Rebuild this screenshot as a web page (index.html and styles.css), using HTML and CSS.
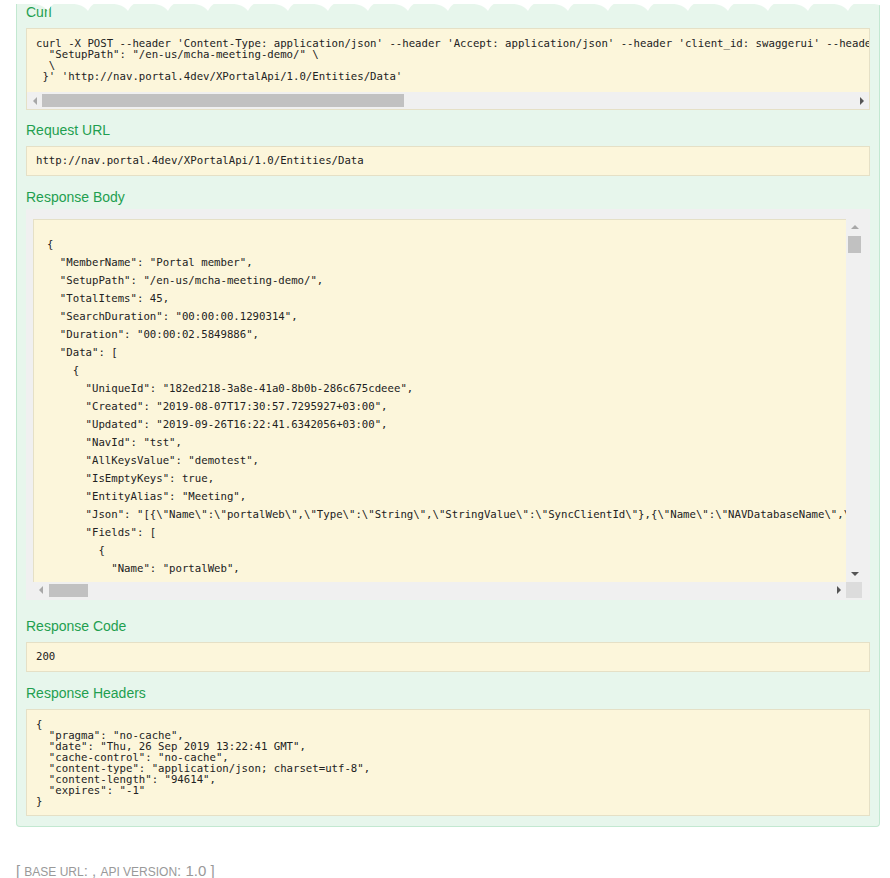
FILE: index.html
```html
<!DOCTYPE html>
<html>
<head>
<meta charset="utf-8">
<link rel="stylesheet" href="styles.css">
</head>
<body>
<div class="page">
  <svg class="tear" width="890" height="20" viewBox="0 0 890 20">
    <defs>
      <pattern id="wave" width="40" height="20" patternUnits="userSpaceOnUse" x="21" y="0">
        <path d="M0 0H40V2C34 2 30 5 27 11C23 5 14 3 0 3Z" fill="#ffffff"/>
      </pattern>
    </defs>
    <rect x="0" y="0" width="890" height="20" fill="url(#wave)"/>
  </svg>

  <div class="panel">
    <h4 class="title first">Curl</h4>
    <div class="box curl">
      <pre class="mono curl-text">curl -X POST --header 'Content-Type: application/json' --header 'Accept: application/json' --header 'client_id: swaggerui' --header 'Authorization: Bearer' -d '{ \
  "SetupPath": "/en-us/mcha-meeting-demo/" \
  \
 }' 'http://nav.portal.4dev/XPortalApi/1.0/Entities/Data'</pre>
      <div class="hbar">
        <div class="btn"><span class="arr-l dim"></span></div>
        <div class="thumb curl-thumb"></div>
        <div class="spacer"></div>
        <div class="btn"><span class="arr-r"></span></div>
      </div>
    </div>

    <h4 class="title">Request URL</h4>
    <pre class="box mono single">http://nav.portal.4dev/XPortalApi/1.0/Entities/Data</pre>

    <h4 class="title body-title">Response Body</h4>
    <div class="body-wrap">
      <div class="scroller">
        <pre class="mono body-text">{
  "MemberName": "Portal member",
  "SetupPath": "/en-us/mcha-meeting-demo/",
  "TotalItems": 45,
  "SearchDuration": "00:00:00.1290314",
  "Duration": "00:00:02.5849886",
  "Data": [
    {
      "UniqueId": "182ed218-3a8e-41a0-8b0b-286c675cdeee",
      "Created": "2019-08-07T17:30:57.7295927+03:00",
      "Updated": "2019-09-26T16:22:41.6342056+03:00",
      "NavId": "tst",
      "AllKeysValue": "demotest",
      "IsEmptyKeys": true,
      "EntityAlias": "Meeting",
      "Json": "[{\"Name\":\"portalWeb\",\"Type\":\"String\",\"StringValue\":\"SyncClientId\"},{\"Name\":\"NAVDatabaseName\",\"Type\":\"String\"}]",
      "Fields": [
        {
          "Name": "portalWeb",</pre>
        <div class="vbar">
          <div class="vbtn"><span class="arr-u dim"></span></div>
          <div class="vthumb"></div>
          <div class="vspace"></div>
          <div class="vbtn"><span class="arr-d"></span></div>
        </div>
        <div class="hbar body-hbar">
          <div class="btn"><span class="arr-l dim"></span></div>
          <div class="thumb body-thumb"></div>
          <div class="spacer"></div>
          <div class="btn"><span class="arr-r"></span></div>
        </div>
        <div class="corner"></div>
      </div>
    </div>

    <h4 class="title code-title">Response Code</h4>
    <pre class="box mono single">200</pre>

    <h4 class="title headers-title">Response Headers</h4>
    <pre class="box mono headers">{
  "pragma": "no-cache",
  "date": "Thu, 26 Sep 2019 13:22:41 GMT",
  "cache-control": "no-cache",
  "content-type": "application/json; charset=utf-8",
  "content-length": "94614",
  "expires": "-1"
}</pre>
  </div>

  <div class="footer">[ <span class="sc">BASE URL</span>: , <span class="sc">API VERSION</span>: 1.0 ]</div>
</div>
</body>
</html>
```

FILE: styles.css
```css
* { box-sizing: border-box; }

html, body {
  margin: 0;
  padding: 0;
  background: #ffffff;
}

body {
  font-family: "Liberation Sans", Arial, sans-serif;
}

.page {
  position: relative;
  width: 890px;
  height: 878px;
  overflow: hidden;
  padding: 0 10px 0 16px;
}

.tear {
  position: absolute;
  top: 0;
  left: 0;
  width: 890px;
  height: 20px;
  z-index: 2;
}

.panel {
  background: #e7f6ec;
  border: 1px solid #c3e8d1;
  border-top: 0;
  border-radius: 0 0 4px 4px;
  padding: 0 9px 10px 9px;
}

.title {
  margin: 12px 0 8px;
  font-size: 14px;
  line-height: 16px;
  font-weight: normal;
  color: #1f9f50;
}

.title.first { margin-top: 4px; }
.title.body-title { margin-top: 13px; margin-bottom: 4px; }
.title.code-title { margin-top: 18px; }
.title.headers-title { margin-top: 13px; }

.box {
  background: #fcf6db;
  border: 1px solid #e5e0c6;
}

.mono {
  font-family: "DejaVu Sans Mono", "Liberation Mono", monospace;
  font-size: 10.68px;
  color: #222222;
  margin: 0;
  white-space: pre;
}

.curl {
  overflow: hidden;
}

.curl-text {
  height: 63px;
  padding: 9px 9px 0 9px;
  line-height: 11px;
  overflow: hidden;
}

.hbar {
  display: flex;
  align-items: center;
  height: 17px;
  background: #f0f0f0;
}

.btn {
  width: 15px;
  height: 100%;
  display: flex;
  align-items: center;
  justify-content: center;
  flex: none;
}

.spacer { flex: 1; }

.thumb {
  height: 13px;
  background: #c1c1c1;
  flex: none;
}

.curl-thumb { width: 362px; }

.arr-l, .arr-r, .arr-u, .arr-d {
  display: block;
  width: 0;
  height: 0;
}

.arr-l {
  border-top: 4px solid transparent;
  border-bottom: 4px solid transparent;
  border-right: 4px solid #555555;
}

.arr-r {
  border-top: 4px solid transparent;
  border-bottom: 4px solid transparent;
  border-left: 4px solid #555555;
}

.arr-u {
  border-left: 4px solid transparent;
  border-right: 4px solid transparent;
  border-bottom: 4px solid #555555;
}

.arr-d {
  border-left: 4px solid transparent;
  border-right: 4px solid transparent;
  border-top: 4px solid #555555;
}

.arr-l.dim { border-right-color: #a8a8a8; }
.arr-u.dim { border-bottom-color: #a8a8a8; }

.single {
  padding: 8px 9px;
  line-height: 12px;
}

.body-wrap {
  background: #f0f0f0;
  padding: 10px 8px 2px 7px;
}

.scroller {
  display: grid;
  grid-template-columns: 813px 16px;
  grid-template-rows: 363px 16px;
}

.body-text {
  background: #fcf6db;
  border-top: 1px solid #e5e0c6;
  border-left: 1px solid #e5e0c6;
  padding: 16px 0 0 13px;
  line-height: 18px;
  overflow: hidden;
}

.vbar {
  display: flex;
  flex-direction: column;
  background: #f0f0f0;
}

.vbtn {
  height: 16px;
  display: flex;
  align-items: center;
  justify-content: center;
  flex: none;
  padding-left: 1px;
}

.vthumb {
  height: 17px;
  margin: 1px 1px 0 2px;
  background: #c1c1c1;
  flex: none;
}

.vspace { flex: 1; }

.body-hbar {
  height: 16px;
}

.body-thumb {
  width: 39px;
  margin-left: 1px;
}

.corner {
  background: #dcdcdc;
}

.headers {
  padding: 9px 9px 8px 9px;
  line-height: 11px;
}

.footer {
  margin-top: 35px;
  font-size: 15px;
  line-height: 17px;
  color: #999999;
}

.sc {
  font-size: 12px;
}
```
